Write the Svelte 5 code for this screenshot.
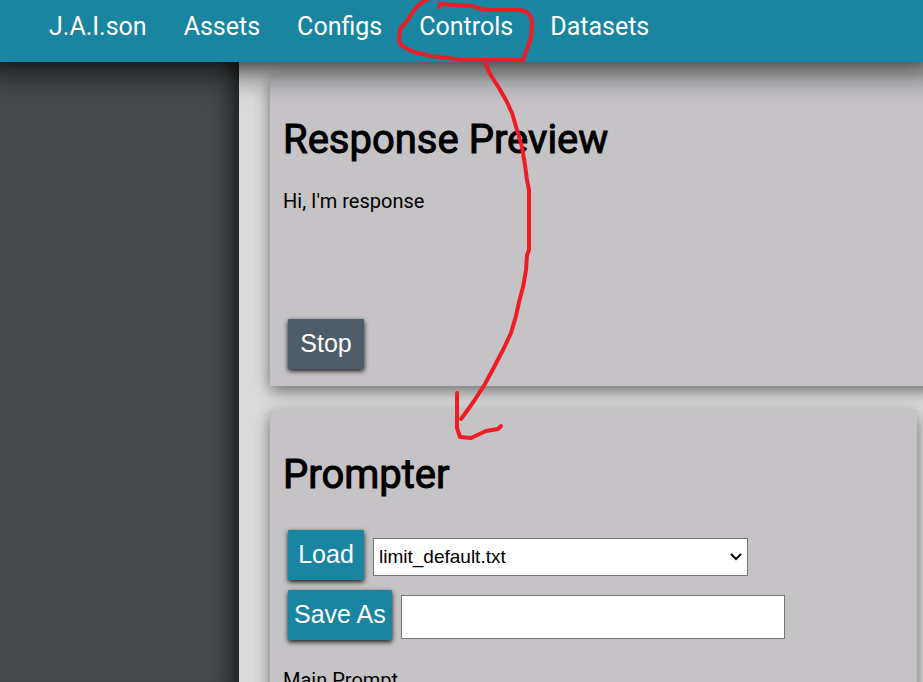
<script>
  const links = ['J.A.I.son', 'Assets', 'Configs', 'Controls', 'Datasets'];
  let limit = $state('limit_default.txt');
  let saveName = $state('');
</script>

<div class="app">
  <header>
    <nav>
      {#each links as link}
        <a href="#{link.toLowerCase()}">{link}</a>
      {/each}
    </nav>
  </header>
  <div class="body">
    <aside></aside>
    <main>
      <section class="card preview">
        <h1>Response Preview</h1>
        <p>Hi, I'm response</p>
        <button class="stop" type="button">Stop</button>
      </section>
      <section class="card prompter">
        <h1>Prompter</h1>
        <div class="row">
          <button type="button">Load</button>
          <div class="picker">
            <select aria-label="Prompt file" bind:value={limit}>
              <option>limit_default.txt</option>
            </select>
            <svg class="chevron" width="12" height="8" viewBox="0 0 12 8" aria-hidden="true">
              <path d="M1 1l5 5 5-5" />
            </svg>
          </div>
        </div>
        <div class="row">
          <button type="button">Save As</button>
          <input type="text" aria-label="Save as name" bind:value={saveName} />
        </div>
        <label for="main-prompt">Main Prompt</label>
        <textarea id="main-prompt"></textarea>
      </section>
    </main>
  </div>
  <svg class="ink" width="923" height="682" viewBox="0 0 923 682" aria-hidden="true">
    <path d="M439 7L440 4L455 5L472 6L482 9L490 10H520L527 12L531 17L532 23L531 38L527 49L523 60H464L448 58L430 56L414 52L402 46L399 41L400 29L407 21L414 10L421 3L428 -1" />
    <path d="M485 62L490 74L499 88L507 102L512 113L517 130L522 147L525 165L527 180L529 190V250L527 255L526 270L523 287L519 302L516 316L511 333L503 350L493 369L485 384L474 401L464 415L461 419" />
    <path d="M457 393V428L460 437L471 438L486 431L498 429L501 426" />
  </svg>
</div>

<style>
  :global(body) {
    margin: 0;
  }
  .app {
    position: relative;
    display: flex;
    flex-direction: column;
    height: 100vh;
    overflow: hidden;
    background: #dcdcdc;
    color: #000;
    font: 20px/24px Roboto, 'Liberation Sans', sans-serif;
  }
  header {
    position: relative;
    z-index: 1;
    flex: none;
    background: #1a85a1;
    box-shadow: 0 -15px 32px 20px rgba(0, 0, 0, 0.95);
  }
  nav {
    display: flex;
    gap: 37px;
    padding: 11px 49px 19px;
  }
  nav a {
    color: #fff;
    font-size: 25px;
    line-height: 32px;
    text-decoration: none;
  }
  .body {
    display: flex;
    flex: 1;
    min-height: 0;
  }
  aside {
    flex: none;
    width: 239px;
    background: #45494c;
    box-shadow: inset -24px 0 24px -20px rgba(0, 0, 0, 0.8);
  }
  main {
    display: flex;
    flex: 1;
    flex-direction: column;
    gap: 24px;
    min-width: 0;
    padding: 13px 6px 0 31px;
  }
  .card {
    flex: none;
    box-sizing: border-box;
    padding: 41px 13px 17px;
    background: #c5c3c6;
    box-shadow: 0 5px 15px rgba(0, 0, 0, 0.5);
  }
  .preview {
    display: flex;
    flex-direction: column;
    align-items: flex-start;
    height: 311px;
    margin-right: -40px;
  }
  h1 {
    margin: 0 0 25px;
    font-size: 40px;
    font-weight: 400;
    line-height: 48px;
    -webkit-text-stroke: 1px #000;
  }
  p {
    margin: 0;
  }
  button {
    height: 50px;
    min-width: 76px;
    padding: 0 6px 2px;
    border: 0;
    border-radius: 1px;
    background: #1a85a1;
    box-shadow: 0 2px 5px rgba(0, 0, 0, 0.9);
    color: #fff;
    font: 25px/32px 'Liberation Sans', Arial, sans-serif;
  }
  .stop {
    margin: auto 0 0 5px;
    background: #4c5c68;
  }
  .row {
    display: flex;
    align-items: center;
    gap: 9px;
    margin: 0 0 10px 5px;
  }
  .prompter h1 {
    margin-bottom: 31px;
  }
  .picker {
    position: relative;
    display: flex;
  }
  .chevron {
    position: absolute;
    top: 15px;
    right: 6px;
    fill: none;
    stroke: #000;
    stroke-width: 2;
    pointer-events: none;
  }
  select,
  input {
    box-sizing: border-box;
    border: 1px solid #767676;
    border-radius: 0;
    background: #fff;
    color: #000;
    font: 19px/24px 'Liberation Sans', Arial, sans-serif;
  }
  select {
    width: 375px;
    height: 38px;
    padding: 0 5px;
    appearance: none;
  }
  .picker,
  input {
    margin-top: 4px;
  }
  input {
    width: 384px;
    height: 44px;
    padding: 0 5px;
  }
  label {
    display: block;
    margin-top: 28px;
  }
  textarea {
    width: 380px;
    height: 120px;
  }
  .ink {
    position: absolute;
    top: 0;
    left: 0;
    z-index: 2;
    pointer-events: none;
    fill: none;
    stroke: #ee1c24;
    stroke-width: 4;
    stroke-linecap: round;
    stroke-linejoin: round;
  }
</style>
